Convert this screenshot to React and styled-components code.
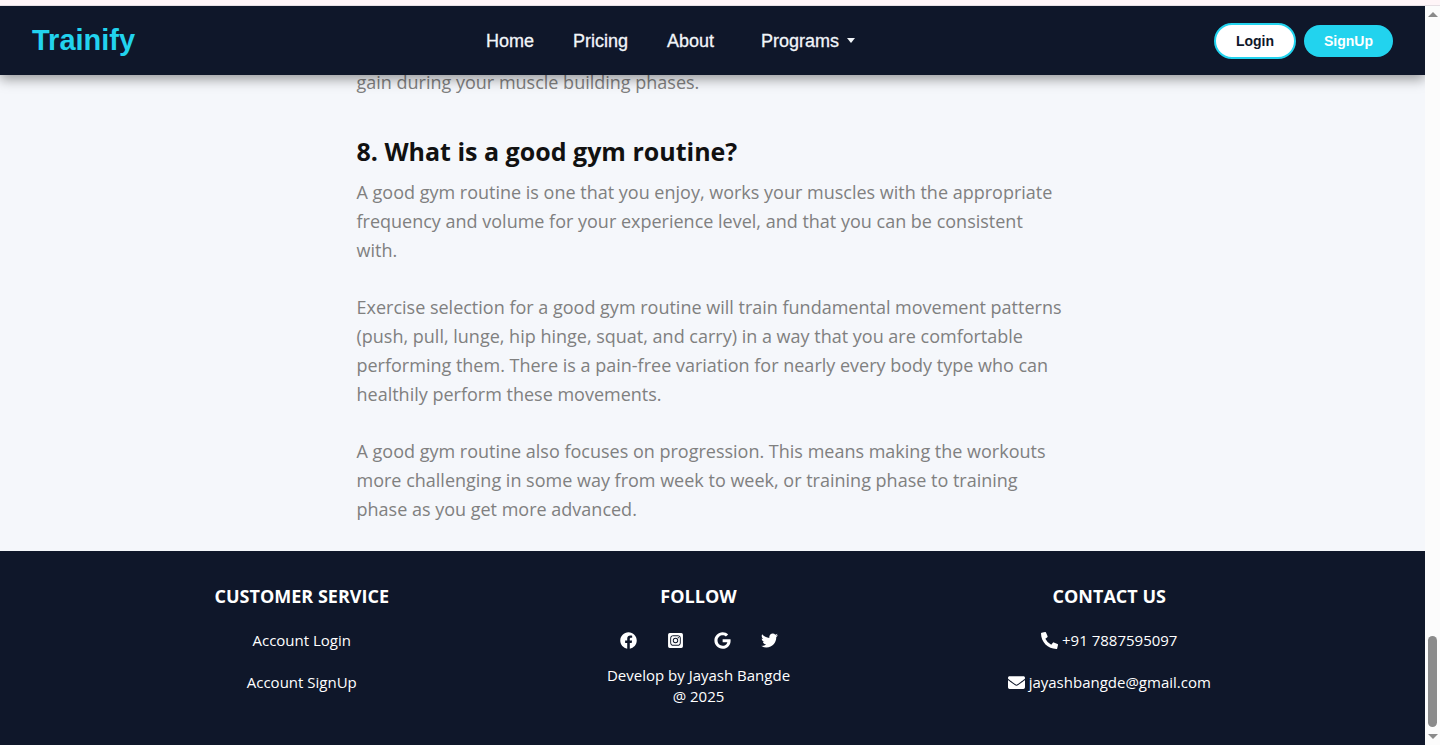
import React from "react";
import styled, { createGlobalStyle } from "styled-components";
import {
  FaFacebook,
  FaInstagramSquare,
  FaGoogle,
  FaTwitter,
  FaPhoneAlt,
  FaEnvelope,
} from "react-icons/fa";

const GlobalStyle = createGlobalStyle`
  *, *::before, *::after { box-sizing: border-box; }
  body {
    margin: 0;
    background: #f5f7fb;
    font-family: "Segoe UI", "Open Sans", "Noto Sans", sans-serif;
  }
  h2, h3, p, ul { margin: 0; padding: 0; }
  ul { list-style: none; }
  a { color: inherit; text-decoration: none; }
`;

const Page = styled.div`
  min-height: 100vh;
  display: flex;
  flex-direction: column;
`;

const TopStrip = styled.div`
  height: 6px;
  background: #fff5f8;
  border-bottom: 1px solid #e6dfe4;
`;

const Frame = styled.div`
  flex: 1;
  display: flex;
`;

const Content = styled.div`
  flex: 1;
  min-width: 0;
  display: flex;
  flex-direction: column;
  overflow: hidden;
`;

const Header = styled.header`
  position: relative;
  z-index: 1;
  height: 69px;
  padding: 0 32px;
  display: flex;
  justify-content: space-between;
  align-items: center;
  background: #0f172a;
  box-shadow: 0 4px 12px rgba(0, 0, 0, 0.4);
  font-family: Arial, "Liberation Sans", sans-serif;
`;

const Logo = styled.a`
  color: #22d3ee;
  font-size: 29px;
  font-weight: 700;
`;

const Nav = styled.nav`
  display: flex;
  align-items: center;
  gap: 39px;
  color: #f1f5f9;
  font-size: 18px;
  line-height: 24px;
`;

const NavLink = styled.a`
  -webkit-text-stroke: 0.3px currentColor;
`;

const NavMenu = styled.button`
  display: flex;
  align-items: center;
  gap: 8px;
  padding: 0 8px;
  border: 0;
  background: none;
  color: inherit;
  font: inherit;
  -webkit-text-stroke: 0.3px currentColor;
`;

const Caret = styled.span`
  border: solid transparent;
  border-width: 5px 4px 0;
  border-top-color: #f1f5f9;
`;

const Actions = styled.div`
  display: flex;
  align-items: center;
  gap: 8px;
`;

const PillButton = styled.button`
  height: ${(p) => (p.$outlined ? 36 : 32)}px;
  padding: 0 20px;
  border: ${(p) => (p.$outlined ? "2px solid #22d3ee" : "0")};
  border-radius: 20px;
  background: ${(p) => (p.$outlined ? "#fff" : "#22d3ee")};
  color: ${(p) => (p.$outlined ? "#0f172a" : "#fff")};
  font: 700 14px Arial, "Liberation Sans", sans-serif;
`;

const Article = styled.main`
  width: 100%;
  max-width: 712px;
  margin: -7px auto 0;
  padding: 0 4px 27px 0;
  color: #808080;
  font-size: 18px;
  line-height: 29px;
`;

const Question = styled.h2`
  margin: 34px 0 7px;
  color: #111;
  font-size: 25px;
  font-weight: 700;
  line-height: 40px;
`;

const Paragraph = styled.p`
  & + & { margin-top: 28px; }
`;

const Footer = styled.footer`
  flex: 1;
  display: flex;
  justify-content: space-evenly;
  padding: 32px 0;
  background: #0f172a;
  color: #fff;
  font-size: 15px;
  line-height: 21px;
  text-align: center;
`;

const FooterColumn = styled.section`
  width: ${(p) => p.$width}px;
  white-space: nowrap;
`;

const FooterTitle = styled.h3`
  margin-bottom: 21px;
  font-size: 18px;
  font-weight: 700;
  line-height: 26px;
`;

const FooterList = styled.ul`
  display: grid;
  gap: 21px;
`;

const ContactLink = styled.a`
  display: flex;
  justify-content: center;
  align-items: center;
  gap: 4px;
`;

const Socials = styled.ul`
  display: flex;
  justify-content: center;
  gap: 30px;
  margin-bottom: 14px;
`;

const SocialLink = styled.a`
  display: flex;
  align-items: center;
  height: 21px;
`;

const ScrollBar = styled.div`
  width: 15px;
  padding: 6px 0;
  display: flex;
  flex-direction: column;
  align-items: center;
  background: #fcfcfc;
`;

const ScrollArrow = styled.span`
  border: solid transparent;
  border-width: ${(p) => (p.$up ? "0 5px 5px" : "5px 5px 0")};
  border-${(p) => (p.$up ? "bottom" : "top")}-color: #8b8b8b;
`;

const ScrollThumb = styled.span`
  width: 9px;
  height: 91px;
  margin: auto 0 7px;
  border-radius: 5px;
  background: #8b8b8b;
`;

const navItems = ["Home", "Pricing", "About"];

const answers = [
  "A good gym routine is one that you enjoy, works your muscles with the appropriate frequency and volume for your experience level, and that you can be consistent with.",
  "Exercise selection for a good gym routine will train fundamental movement patterns (push, pull, lunge, hip hinge, squat, and carry) in a way that you are comfortable performing them. There is a pain-free variation for nearly every body type who can healthily perform these movements.",
  "A good gym routine also focuses on progression. This means making the workouts more challenging in some way from week to week, or training phase to training phase as you get more advanced.",
];

const socials = [
  { name: "Facebook", Icon: FaFacebook },
  { name: "Instagram", Icon: FaInstagramSquare },
  { name: "Google", Icon: FaGoogle },
  { name: "Twitter", Icon: FaTwitter },
];

export default function App() {
  return (
    <Page>
      <GlobalStyle />
      <TopStrip />
      <Frame>
        <Content>
          <Header>
            <Logo href="#">Trainify</Logo>
            <Nav>
              {navItems.map((item) => (
                <NavLink key={item} href="#">{item}</NavLink>
              ))}
              <NavMenu type="button">
                Programs
                <Caret />
              </NavMenu>
            </Nav>
            <Actions>
              <PillButton type="button" $outlined>Login</PillButton>
              <PillButton type="button">SignUp</PillButton>
            </Actions>
          </Header>

          <Article>
            <Paragraph>gain during your muscle building phases.</Paragraph>
            <Question>8. What is a good gym routine?</Question>
            {answers.map((text) => (
              <Paragraph key={text}>{text}</Paragraph>
            ))}
          </Article>

          <Footer>
            <FooterColumn $width={178}>
              <FooterTitle>CUSTOMER SERVICE</FooterTitle>
              <FooterList>
                <li><a href="#">Account Login</a></li>
                <li><a href="#">Account SignUp</a></li>
              </FooterList>
            </FooterColumn>
            <FooterColumn $width={190}>
              <FooterTitle>FOLLOW</FooterTitle>
              <Socials>
                {socials.map(({ name, Icon }) => (
                  <li key={name}>
                    <SocialLink href="#" aria-label={name}>
                      <Icon size={17} />
                    </SocialLink>
                  </li>
                ))}
              </Socials>
              <p>
                Develop by Jayash Bangde
                <br />@ 2025
              </p>
            </FooterColumn>
            <FooterColumn $width={206}>
              <FooterTitle>CONTACT US</FooterTitle>
              <FooterList>
                <li>
                  <ContactLink href="tel:+917887595097">
                    <FaPhoneAlt size={17} />
                    +91 7887595097
                  </ContactLink>
                </li>
                <li>
                  <ContactLink href="mailto:jayashbangde@gmail.com">
                    <FaEnvelope size={17} />
                    jayashbangde@gmail.com
                  </ContactLink>
                </li>
              </FooterList>
            </FooterColumn>
          </Footer>
        </Content>
        <ScrollBar aria-hidden="true">
          <ScrollArrow $up />
          <ScrollThumb />
          <ScrollArrow />
        </ScrollBar>
      </Frame>
    </Page>
  );
}
